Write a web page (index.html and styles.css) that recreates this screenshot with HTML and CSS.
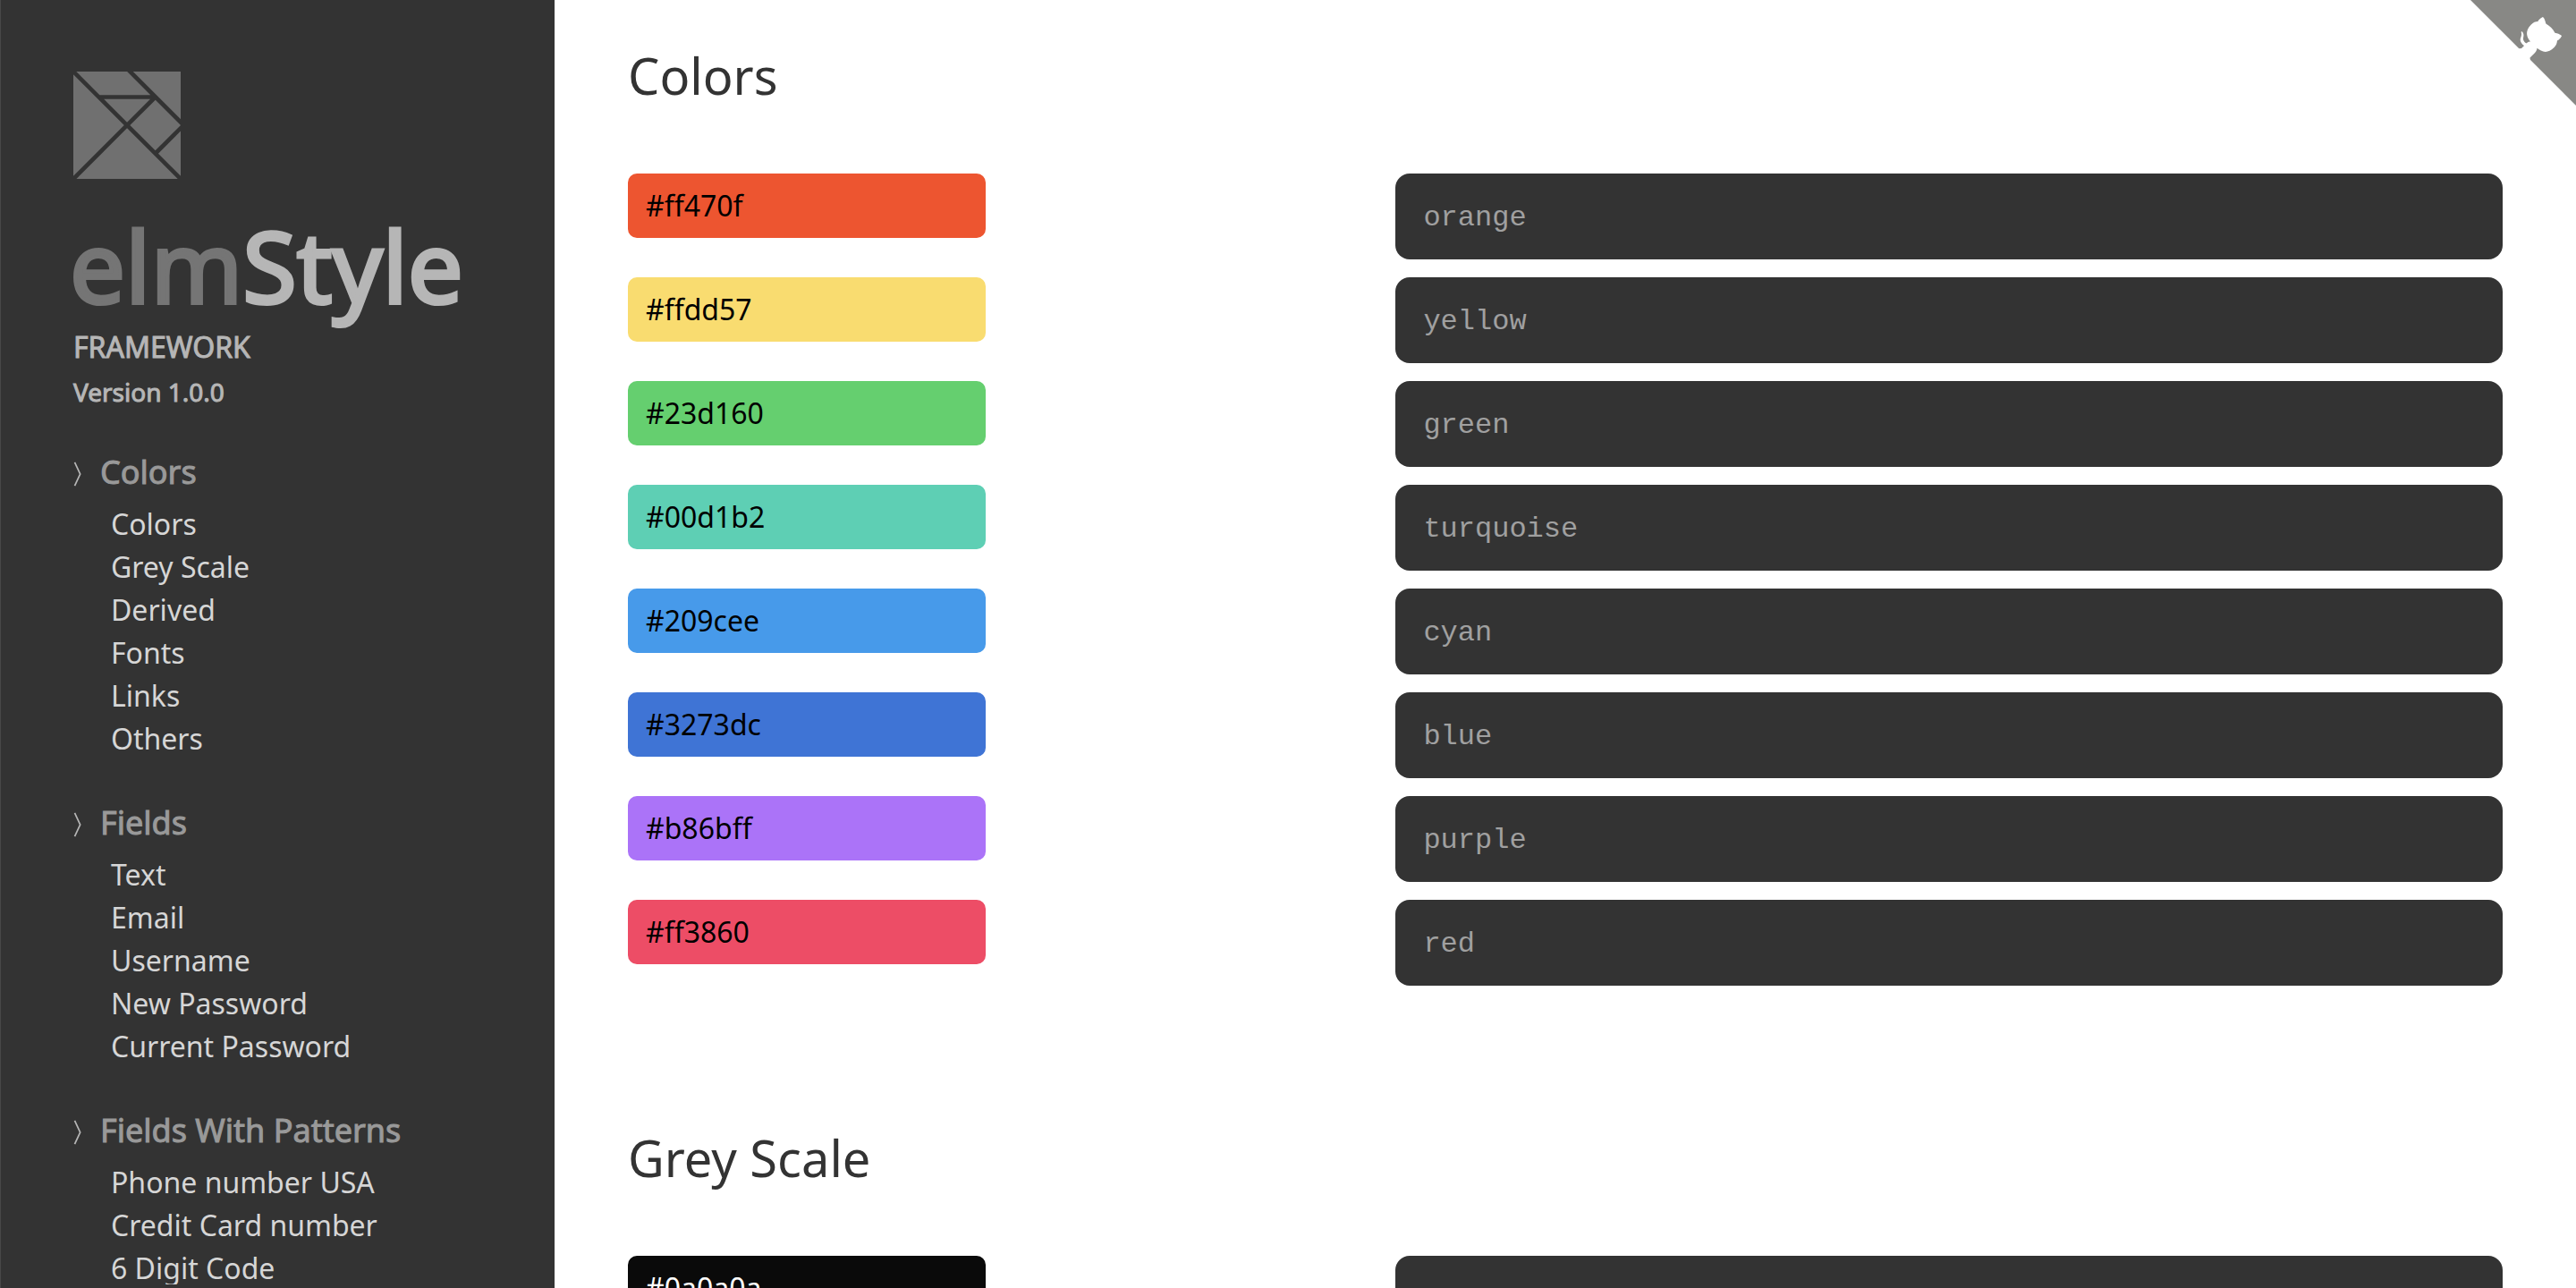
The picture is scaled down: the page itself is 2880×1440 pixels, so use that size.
FILE: index.html
```html
<!DOCTYPE html>
<html lang="en">
<head>
<meta charset="utf-8">
<title>elmStyle Framework</title>
<link rel="stylesheet" href="styles.css">
</head>
<body>
<div class="layout">
  <aside class="sidebar">
    <div class="sidebar-scroll">
      <svg class="logo" viewBox="0 0 323 323" aria-hidden="true">
        <polygon points="161.6,152.8 231.5,82.9 91.8,82.9"/>
        <polygon points="8.9,0 79.2,70.4 232.2,70.4 161.8,0"/>
        <rect x="193" y="107.4" width="107.7" height="108.2" transform="matrix(0.7071 0.7071 -0.7071 0.7071 186.47 -127.24)"/>
        <polygon points="323.3,143.7 323.3,0 179.6,0"/>
        <polygon points="152.8,161.6 0,8.9 0,314.4"/>
        <polygon points="255.5,246.7 323.3,314.4 323.3,178.9"/>
        <polygon points="161.6,170.5 8.9,323.3 314.4,323.3"/>
      </svg>
      <h1 class="brand"><span class="brand-elm">elm</span>Style</h1>
      <p class="tagline">FRAMEWORK</p>
      <p class="version">Version 1.0.0</p>
      <nav class="nav">
        <section class="nav-group">
          <h2 class="nav-title"><svg class="chevron" viewBox="0 0 10 32" aria-hidden="true"><path d="M1 1L8 16L1 31"/></svg>Colors</h2>
          <ul class="nav-list">
            <li><a href="#colors">Colors</a></li>
            <li><a href="#grey-scale">Grey Scale</a></li>
            <li><a href="#derived">Derived</a></li>
            <li><a href="#fonts">Fonts</a></li>
            <li><a href="#links">Links</a></li>
            <li><a href="#others">Others</a></li>
          </ul>
        </section>
        <section class="nav-group">
          <h2 class="nav-title"><svg class="chevron" viewBox="0 0 10 32" aria-hidden="true"><path d="M1 1L8 16L1 31"/></svg>Fields</h2>
          <ul class="nav-list">
            <li><a href="#text">Text</a></li>
            <li><a href="#email">Email</a></li>
            <li><a href="#username">Username</a></li>
            <li><a href="#new-password">New Password</a></li>
            <li><a href="#current-password">Current Password</a></li>
          </ul>
        </section>
        <section class="nav-group">
          <h2 class="nav-title"><svg class="chevron" viewBox="0 0 10 32" aria-hidden="true"><path d="M1 1L8 16L1 31"/></svg>Fields With Patterns</h2>
          <ul class="nav-list">
            <li><a href="#phone">Phone number USA</a></li>
            <li><a href="#credit-card">Credit Card number</a></li>
            <li><a href="#digit-code">6 Digit Code</a></li>
          </ul>
        </section>
      </nav>
    </div>
  </aside>
  <main class="content">
    <section class="block" id="colors">
      <h2 class="block-title">Colors</h2>
      <div class="rows">
        <div class="row"><div class="swatch orange">#ff470f</div><code class="code">orange</code></div>
        <div class="row"><div class="swatch yellow">#ffdd57</div><code class="code">yellow</code></div>
        <div class="row"><div class="swatch green">#23d160</div><code class="code">green</code></div>
        <div class="row"><div class="swatch turquoise">#00d1b2</div><code class="code">turquoise</code></div>
        <div class="row"><div class="swatch cyan">#209cee</div><code class="code">cyan</code></div>
        <div class="row"><div class="swatch blue">#3273dc</div><code class="code">blue</code></div>
        <div class="row"><div class="swatch purple">#b86bff</div><code class="code">purple</code></div>
        <div class="row"><div class="swatch red">#ff3860</div><code class="code">red</code></div>
      </div>
    </section>
    <section class="block" id="grey-scale">
      <h2 class="block-title">Grey Scale</h2>
      <div class="rows">
        <div class="row"><div class="swatch black">#0a0a0a</div><code class="code">&nbsp;</code></div>
      </div>
    </section>
  </main>
</div>
<a class="github-corner" href="#source" aria-label="View source on GitHub">
  <svg viewBox="0 0 250 250" aria-hidden="true">
    <path class="corner-bg" d="M0,0 L115,115 L130,115 L142,142 L250,250 L250,0 Z"/>
    <path class="corner-cat" d="M128.3,109.0 C113.8,99.7 119.0,89.6 119.0,89.6 C122.0,82.7 120.5,78.6 120.5,78.6 C119.2,72.0 123.4,76.3 123.4,76.3 C127.3,80.9 125.5,87.3 125.5,87.3 C122.9,97.6 130.6,101.9 134.4,103.2"/>
    <path class="corner-cat" d="M115.0,115.0 C114.9,115.1 118.7,116.5 119.8,115.4 L133.7,101.6 C136.9,99.2 139.9,98.4 142.2,98.6 C133.8,88.0 127.5,74.4 143.8,58.0 C148.5,53.4 154.0,51.2 159.7,51.0 C160.3,49.4 163.2,43.6 171.4,40.1 C171.4,40.1 176.1,42.5 178.8,56.2 C183.1,58.6 187.2,61.8 190.9,65.4 C194.5,69.0 197.7,73.2 200.1,77.6 C213.8,80.2 216.3,84.9 216.3,84.9 C212.7,93.1 206.9,96.0 205.4,96.6 C205.1,102.4 203.0,107.8 198.3,112.5 C181.9,128.9 168.3,122.5 157.7,114.1 C157.9,116.9 156.7,120.9 152.7,124.9 L141.0,136.5 C139.8,137.7 141.6,141.9 141.8,141.8 Z"/>
  </svg>
</a>
</body>
</html>
```
FILE: styles.css
```css
* { box-sizing: border-box; }

html, body { height: 100%; margin: 0; }

body {
  overflow: hidden;
  background: #fff;
  color: #333;
  font-family: "Noto Sans", sans-serif;
  font-size: 32px;
  line-height: 48px;
}

h1, h2, p, ul { margin: 0; padding: 0; font-weight: 400; }
ul { list-style: none; }
a { color: inherit; text-decoration: none; }

.layout { display: flex; height: 100vh; }

/* Sidebar */
.sidebar {
  flex: 0 0 620px;
  padding: 0 80px 4px 77px;
  background: #333;
  border-left: 1px solid #484848;
}
.sidebar-scroll { height: 100%; overflow: hidden; padding-top: 80px; }
.logo { display: block; width: 120px; height: 120px; fill: #707070; }
.logo, .tagline, .version, .nav { margin-left: 4px; }
.brand {
  margin-top: 36px;
  color: #b6b6b6;
  font-size: 110px;
  line-height: 120px;
  -webkit-text-stroke: 4px currentColor;
}
.brand-elm { color: #757575; }
.tagline { margin-top: 8px; color: #b6b6b6; -webkit-text-stroke: 1px currentColor; }
.version { margin-top: 2px; color: #b6b6b6; font-size: 28px; -webkit-text-stroke: 1px currentColor; }
.nav { display: flex; flex-direction: column; gap: 46px; margin-top: 42px; }
.nav-title {
  display: flex;
  align-items: center;
  gap: 20px;
  margin-bottom: 10px;
  color: #999;
  font-size: 36px;
  -webkit-text-stroke: 1px currentColor;
}
.chevron { width: 10px; height: 28px; margin-top: 4px; fill: none; stroke: #b6b6b6; stroke-width: 2; }
.nav-list { padding-left: 42px; color: #d6d6d6; }
.nav-list a { display: block; }

/* Main column */
.content { flex: 1; min-width: 0; overflow: hidden; padding: 0 82px; }
.block { padding-top: 42px; padding-bottom: 108px; }
.block-title { margin-bottom: 68px; font-size: 56px; line-height: 84px; }
.rows { display: flex; flex-direction: column; gap: 20px; }
.row { display: grid; grid-template-columns: 40% 1fr; gap: 20px; align-items: start; }
.swatch { width: 400px; padding: 12px 20px; border-radius: 10px; color: #000; }
.code {
  padding: 26px 31px 22px;
  border-radius: 16px;
  background: #333;
  color: #a0a0a0;
  font-family: "Courier New", "Liberation Mono", monospace;
  font-size: 32px;
}

.orange { background: #ed5530; }
.yellow { background: #f9dc70; }
.green { background: #65cf6f; }
.turquoise { background: #5ecfb4; }
.cyan { background: #479aea; }
.blue { background: #3f74d5; }
.purple { background: #ab73f8; }
.red { background: #ed4d66; }
.black { background: #0a0a0a; color: #fff; }

.github-corner { position: absolute; top: 0; right: 0; }
.github-corner svg { display: block; width: 118px; height: 118px; }
.corner-bg { fill: #888885; }
.corner-cat { fill: #fff; }
```
